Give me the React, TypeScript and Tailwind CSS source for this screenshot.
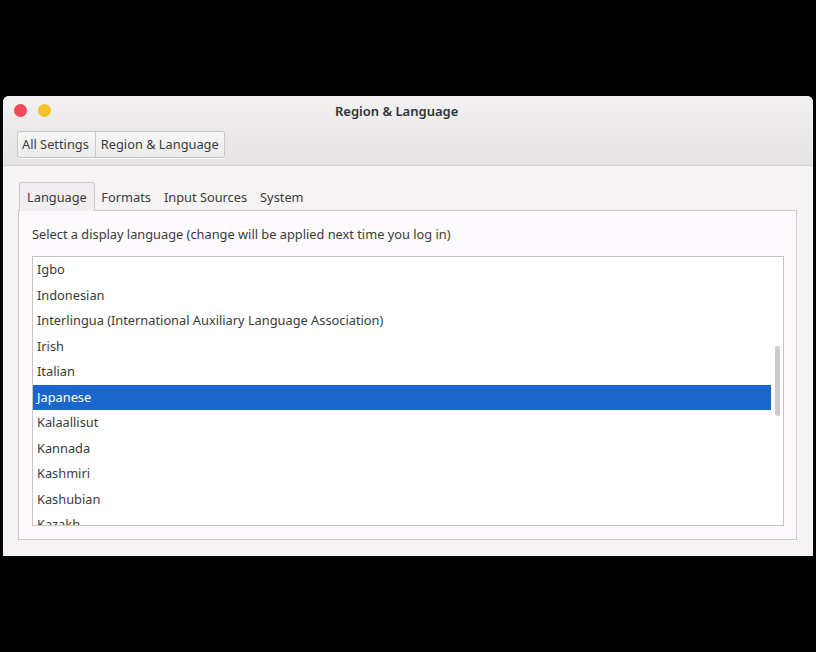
const languages = [
  "Igbo",
  "Indonesian",
  "Interlingua (International Auxiliary Language Association)",
  "Irish",
  "Italian",
  "Japanese",
  "Kalaallisut",
  "Kannada",
  "Kashmiri",
  "Kashubian",
  "Kazakh",
];

const tabs = ["Language", "Formats", "Input Sources", "System"];

export default function App() {
  return (
    <div
      className="w-[816px] h-[652px] bg-black pt-[96px] px-[3px] text-[12.8px] text-[#3b3b3b]"
      style={{ fontFamily: '"Noto Sans", "Open Sans", sans-serif' }}
    >
      <div className="h-[460px] rounded-t-[6px] bg-[#f5f3f4] flex flex-col overflow-hidden">
        {/* header bar */}
        <div className="h-[70px] shrink-0 bg-gradient-to-b from-[#f3f1f1] to-[#e4e2e2] border-b border-[#d6d2d3] flex flex-col">
          <div className="flex items-center h-[27px] pt-[1px]">
            <div className="flex items-center gap-[11px] pl-[11px]">
              <span className="w-[13px] h-[13px] rounded-full bg-[#ee4a57]" />
              <span className="w-[13px] h-[13px] rounded-full bg-[#f7c12a]" />
            </div>
            <div className="ml-[284px] mt-[4px] font-semibold text-[13px] text-[#2e3436]">Region &amp; Language</div>
          </div>
          <div className="pl-[14px] pt-[8px]">
            <div className="inline-flex h-[27px] rounded-[3px] border border-[#c9c5c6] bg-gradient-to-b from-[#f8f7f7] to-[#ecebeb] shadow-[0_1px_0_rgba(255,255,255,0.8)]">
              <div className="pl-[4px] pr-[6px] flex items-center border-r border-[#cfcbcc]">All Settings</div>
              <div className="px-[5px] flex items-center">Region &amp; Language</div>
            </div>
          </div>
        </div>

        {/* body */}
        <div className="flex-1 min-h-0 flex flex-col pt-[16px] pl-[15px] pr-[16px] pb-[16px]">
          <div className="flex items-end h-[28px] shrink-0 pl-[1px]">
            {tabs.map((t, i) =>
              i === 0 ? (
                <div
                  key={t}
                  className="h-[29px] -mb-[1px] px-[7px] pt-[2px] flex items-center rounded-t-[3px] border border-b-0 border-[#cdc9cb] bg-[#f0eef0] relative z-10"
                >
                  {t}
                </div>
              ) : (
                <div key={t} className="h-[28px] px-[6.5px] pt-[4px] flex items-center">
                  {t}
                </div>
              )
            )}
          </div>
          <div className="flex-1 min-h-0 flex flex-col border border-[#cdc9cb] bg-[#fcfafc] px-[13px] pb-[13px] pr-[12px]">
            <div className="h-[45px] shrink-0 flex items-center pt-[2px]">
              Select a display language (change will be applied next time you log in)
            </div>
            <div className="flex-1 min-h-0 flex border border-[#c8c4c6] bg-white overflow-hidden">
              <div className="flex-1 flex flex-col">
                {languages.map((l) => (
                  <div
                    key={l}
                    className={
                      "h-[25.5px] shrink-0 flex items-center pl-[4px] " +
                      (l === "Japanese" ? "bg-[#1a66cc] text-white" : "")
                    }
                  >
                    {l}
                  </div>
                ))}
              </div>
              <div className="w-[12px] flex justify-center pt-[89px]">
                <div className="w-[5px] h-[70px] rounded-full bg-[#cdcacc]" />
              </div>
            </div>
          </div>
        </div>
      </div>
    </div>
  );
}
